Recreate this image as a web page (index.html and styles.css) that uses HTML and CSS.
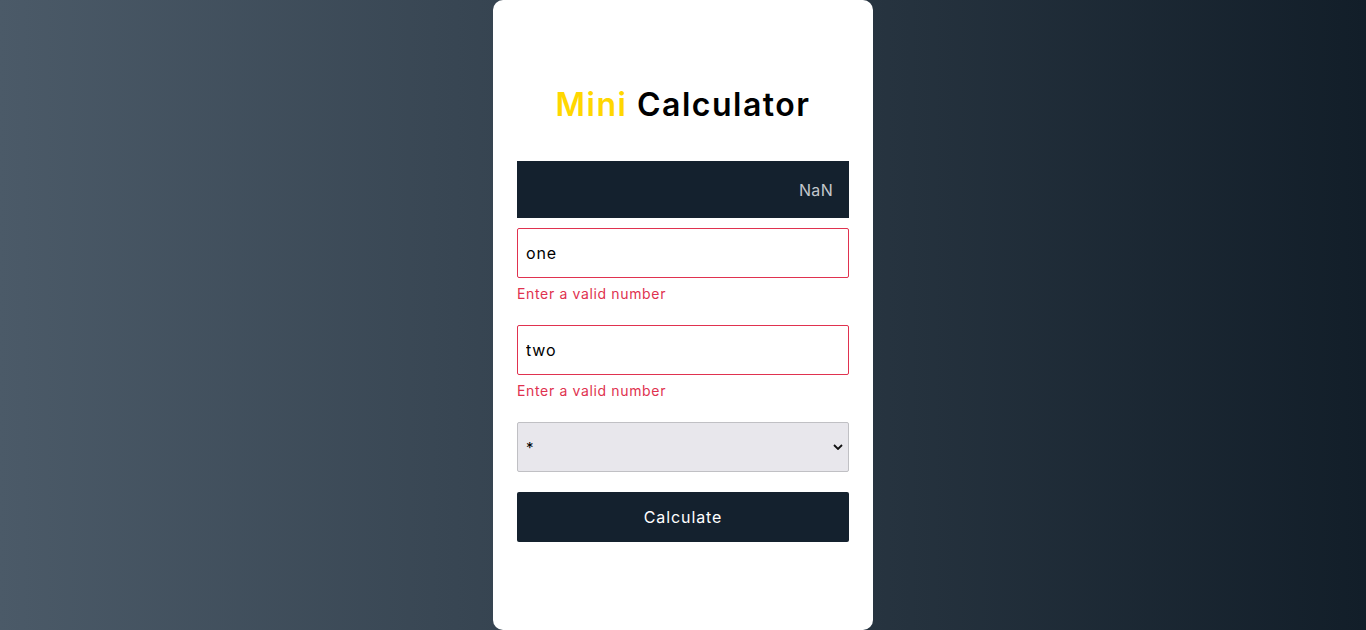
FILE: index.html
```html
<!DOCTYPE html>
<html lang="en">
<head>
<meta charset="utf-8">
<title>Mini Calculator</title>
<link rel="stylesheet" href="styles.css">
</head>
<body>
<main class="card">
  <h1 class="title"><span class="accent">Mini</span> Calculator</h1>
  <div class="display">NaN</div>
  <div class="field">
    <input class="input invalid" type="text" value="one">
    <p class="error">Enter a valid number</p>
  </div>
  <div class="field">
    <input class="input invalid" type="text" value="two">
    <p class="error">Enter a valid number</p>
  </div>
  <div class="select-wrap">
    <select class="select">
      <option>*</option>
      <option>+</option>
      <option>-</option>
      <option>/</option>
    </select>
    <svg class="chev" width="10" height="6" viewBox="0 0 10 6"><path d="M1 1l4 4 4-4" fill="none" stroke="#111" stroke-width="1.8"/></svg>
  </div>
  <button class="btn">Calculate</button>
</main>
</body>
</html>
```
FILE: styles.css
```css
* { box-sizing: border-box; }
html, body { height: 100%; }
body {
  margin: 0;
  font-family: Inter, "Open Sans", "Liberation Sans", sans-serif;
  background: linear-gradient(to right, #4b5a68, #121e29);
  display: flex;
  justify-content: center;
}
.card {
  width: 380px;
  height: 630px;
  background: #fff;
  border-radius: 10px;
  padding: 80px 24px 0;
  display: flex;
  flex-direction: column;
}
.title {
  margin: 0 0 31px;
  text-align: center;
  font-size: 32px;
  font-weight: 600;
  line-height: 50px;
  letter-spacing: 1.5px;
  color: #000;
}
.accent { color: #ffd700; }
.display {
  height: 57px;
  background: #14212e;
  color: #c3c7cc;
  font-size: 16px;
  letter-spacing: 0.3px;
  display: flex;
  align-items: center;
  justify-content: flex-end;
  padding: 0 16px;
  margin-bottom: 10px;
}
.field { margin-bottom: 21px; }
.input {
  display: block;
  width: 100%;
  height: 50px;
  border: 1px solid #e0324f;
  border-radius: 2px;
  padding: 0 8px;
  font-family: inherit;
  font-size: 16px;
  letter-spacing: 0.9px;
  color: #000;
  outline: none;
}
.error {
  margin: 6px 0 0;
  font-size: 14px;
  line-height: 20px;
  letter-spacing: 0.65px;
  color: #e0324f;
}
.select-wrap { position: relative; margin-bottom: 20px; }
.select {
  display: block;
  width: 100%;
  height: 50px;
  background: #e8e7ec;
  border: 1px solid #c0c0c4;
  border-radius: 2px;
  padding: 0 8px;
  font-family: inherit;
  font-size: 15px;
  color: #000;
  appearance: none;
  -webkit-appearance: none;
}
.chev { position: absolute; right: 6px; top: 22px; pointer-events: none; }
.btn {
  height: 50px;
  width: 100%;
  background: #14212e;
  color: #fff;
  border: none;
  border-radius: 2px;
  font-family: inherit;
  font-size: 16px;
  letter-spacing: 0.9px;
}
```
